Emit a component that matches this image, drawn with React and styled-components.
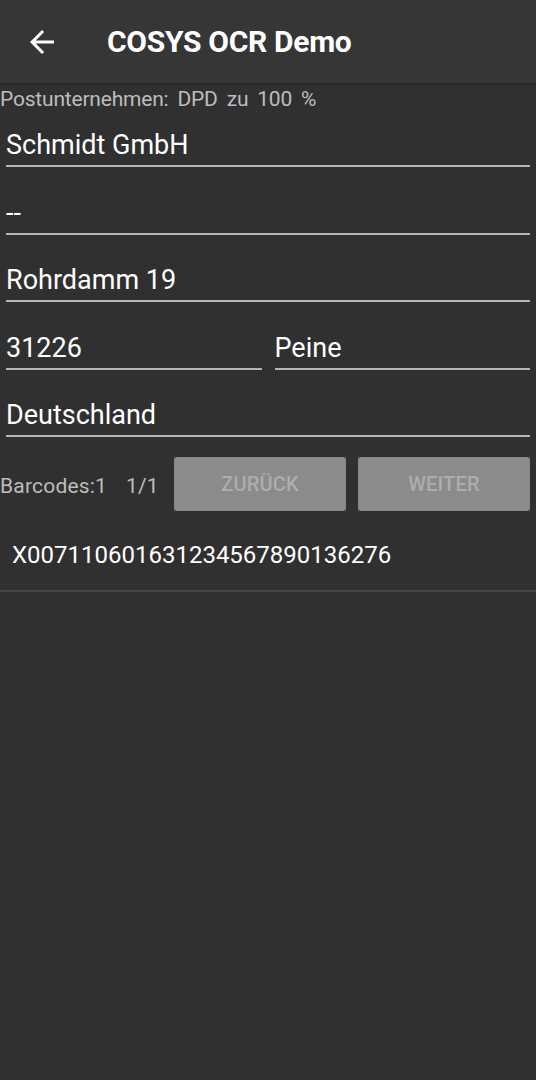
import React from 'react'
import styled, { createGlobalStyle } from 'styled-components'

const Global = createGlobalStyle`
  html, body {
    margin: 0;
    padding: 0;
    background-color: #303030;
    font-family: Roboto, "Noto Sans", sans-serif;
  }
`

const Page = styled.div`
  width: 536px;
  min-height: 1080px;
  background-color: #303030;
`

const Toolbar = styled.div`
  height: 83px;
  background-color: #363636;
  display: flex;
  align-items: center;
  box-shadow: 0 1px 3px rgba(0, 0, 0, 0.35);
`

const BackButton = styled.div`
  width: 84px;
  height: 83px;
  display: flex;
  align-items: center;
  justify-content: center;
`

const Title = styled.h1`
  margin: 0 0 0 23px;
  font-size: 30px;
  font-weight: 700;
  color: #fff;
  letter-spacing: -0.3px;
`

const Info = styled.p`
  margin: 0;
  padding: 3px 0 0 0;
  font-size: 21px;
  line-height: 26px;
  color: #bdbdbd;
  word-spacing: 4px;
  letter-spacing: -0.2px;
`

const Form = styled.div`
  padding: 0 6px;
`

const Row = styled.div`
  display: flex;
  gap: 13px;
`

const Field = styled.div`
  flex: 1;
  height: ${p => (p.first ? '55px' : '67.5px')};
  display: flex;
  align-items: flex-end;
  border-bottom: 2px solid #b5b5b5;
  font-size: 27px;
  color: #fff;
  padding-bottom: 4px;
  box-sizing: border-box;
  line-height: 32px;
`

const BarcodeBar = styled.div`
  display: flex;
  align-items: center;
  margin-top: 20px;
  height: 54px;
  padding-right: 6px;
`

const BarcodeLabel = styled.span`
  font-size: 21px;
  color: #bdbdbd;
  width: 174px;
  white-space: pre;
  padding-top: 3px;
  letter-spacing: 0.2px;
  word-spacing: 4px;
`

const Button = styled.button`
  flex: 1;
  height: 54px;
  border: none;
  border-radius: 3px;
  background-color: #8b8b8b;
  color: #adadad;
  font-family: Roboto, sans-serif;
  font-size: 20px;
  font-weight: 500;
  letter-spacing: 0.2px;
  & + & {
    margin-left: 12px;
  }
`

const BarcodeItem = styled.div`
  height: 81px;
  padding: 8px 0 0 12px;
  display: flex;
  align-items: center;
  font-size: 24px;
  color: #fff;
  border-bottom: 2px solid #454545;
  box-sizing: border-box;
`

const App = () => (
  <Page>
    <Global />
    <Toolbar>
      <BackButton>
        <svg width="36" height="36" viewBox="0 0 24 24" fill="#fff">
          <path d="M20 11H7.83l5.59-5.59L12 4l-8 8 8 8 1.41-1.41L7.83 13H20v-2z" />
        </svg>
      </BackButton>
      <Title>COSYS OCR Demo</Title>
    </Toolbar>
    <Info>Postunternehmen: DPD zu 100 %</Info>
    <Form>
      <Row><Field first>Schmidt GmbH</Field></Row>
      <Row><Field>--</Field></Row>
      <Row><Field>Rohrdamm 19</Field></Row>
      <Row>
        <Field>31226</Field>
        <Field>Peine</Field>
      </Row>
      <Row><Field>Deutschland</Field></Row>
    </Form>
    <BarcodeBar>
      <BarcodeLabel>Barcodes:1  1/1</BarcodeLabel>
      <Button>ZURÜCK</Button>
      <Button>WEITER</Button>
    </BarcodeBar>
    <BarcodeItem>X007110601631234567890136276</BarcodeItem>
  </Page>
)

export default App
